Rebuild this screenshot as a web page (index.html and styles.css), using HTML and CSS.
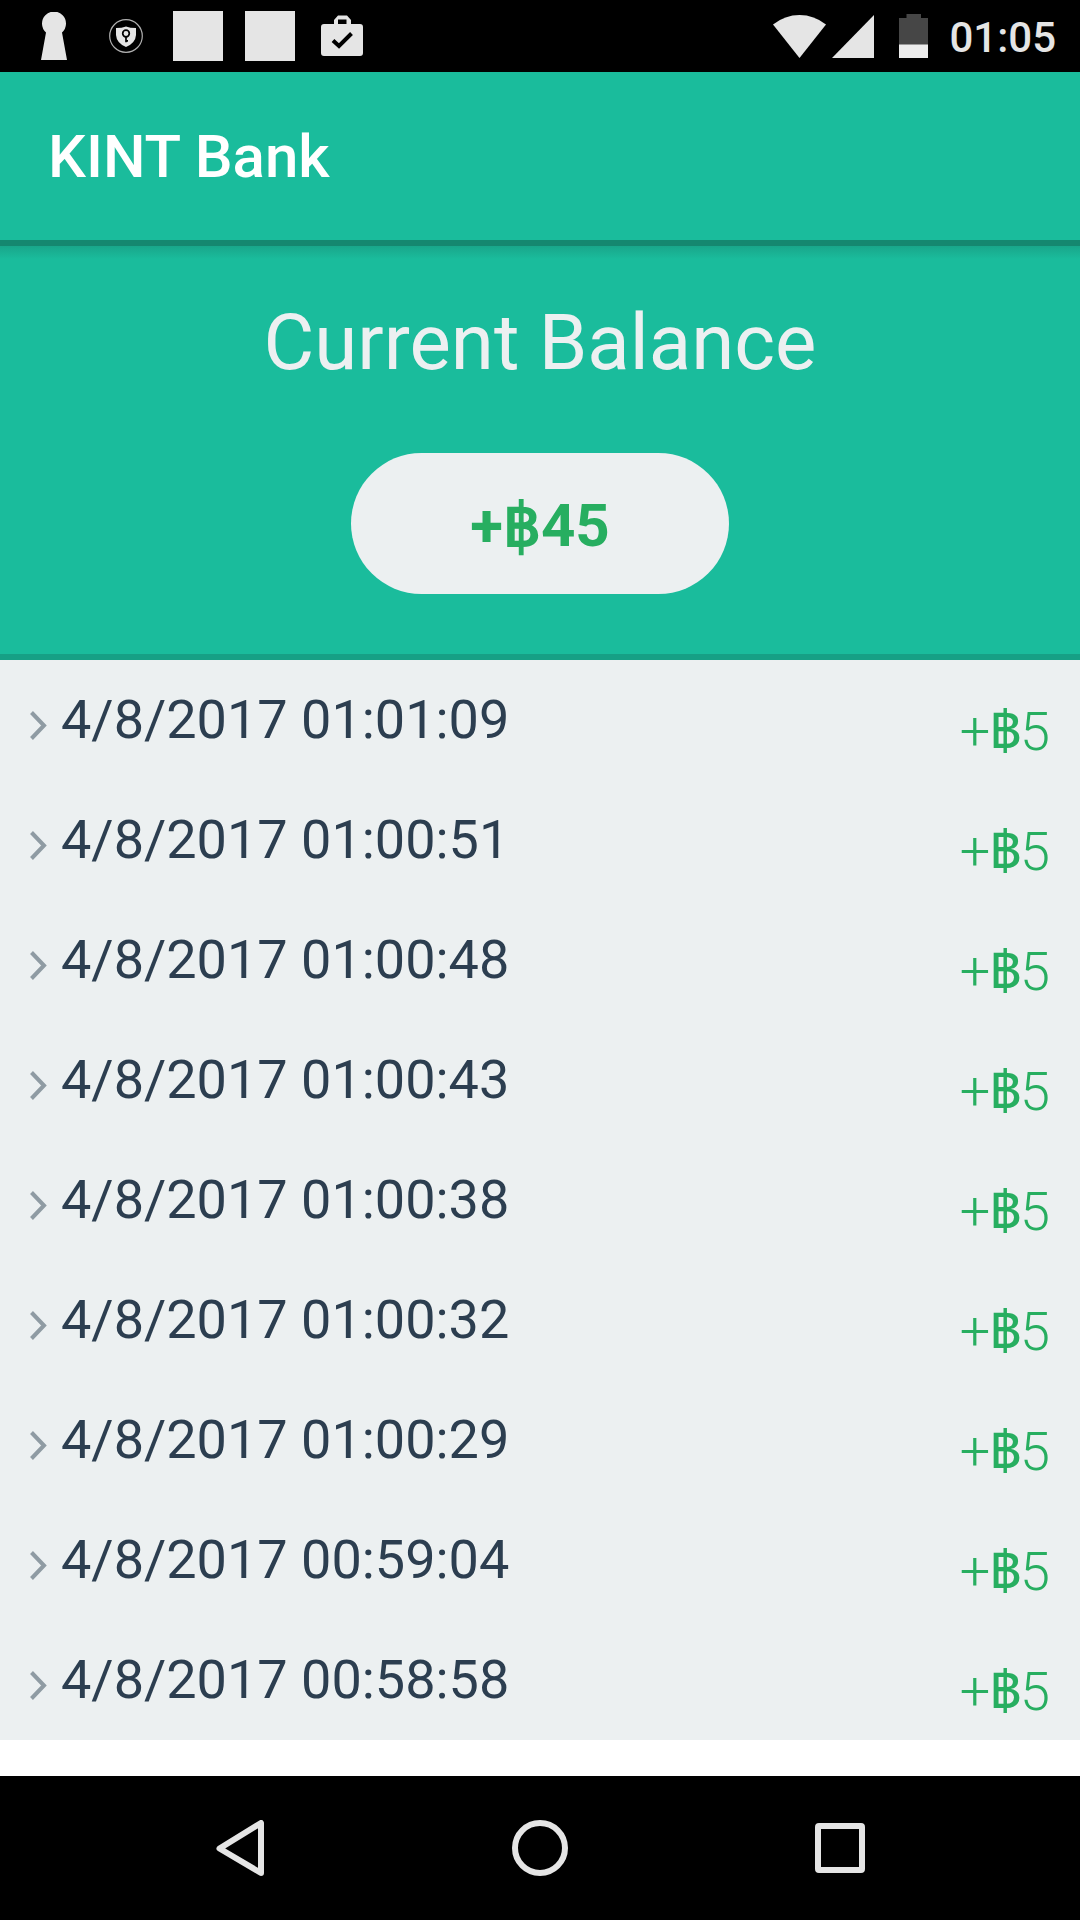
FILE: index.html
```html
<!DOCTYPE html>
<html lang="en">
  <head>
    <meta charset="utf-8" />
    <title>KINT Bank</title>
    <link rel="stylesheet" href="styles.css">
  </head>
  <body>
    <div class="status-bar">
      <div class="notifications">
        <svg class="keyhole" width="26" height="48" viewBox="0 0 26 48">
          <path d="M5 20.500A12 12 0 1 1 21 20.500L26 48H0Z" />
        </svg>
        <svg class="vpn" width="34" height="34" viewBox="0 0 34 34">
          <circle cx="17" cy="17" r="16.300" fill="none" stroke="#b0b0b0" stroke-width="1.200" />
          <path d="M7 9Q13 9 17 7.500Q21 9 27 9V16Q26.500 24 17 28Q7.500 24 7 16Z" />
          <circle cx="17" cy="14.500" r="3.300" fill="none" stroke="#000" stroke-width="1.700" />
          <path d="M17 18V23.200M17 21.800H19" fill="none" stroke="#000" stroke-width="1.700" />
        </svg>
        <span class="blank"></span>
        <span class="blank"></span>
        <svg class="bag" width="42" height="41" viewBox="0 0 42 41">
          <path fill-rule="evenodd" d="M13 9V5L17 0.500H26L30 5V9H39Q42 9 42 12V38Q42 41 39 41H3Q0 41 0 38V12Q0 9 3 9ZM17 9H25.500V4.500H17Z" />
          <path d="M12 25.500L18 31L30.500 18.500" fill="none" stroke="#000" stroke-width="4" />
        </svg>
      </div>
      <div class="system">
        <svg class="wifi" width="54" height="43" viewBox="0 0 54 43">
          <path d="M0 9.500Q12 0 26.500 0T53 9.500L26.500 43Z" />
        </svg>
        <svg class="signal" width="42" height="43" viewBox="0 0 42 43">
          <path d="M42 0V43H0Z" />
        </svg>
        <svg class="battery" width="29" height="44" viewBox="0 0 29 44">
          <path d="M7.500 0H22V4H29V31H0V4H7.500Z" fill="#464646" />
          <path d="M0 30.500H29V44H0Z" fill="#ececec" />
        </svg>
        <span class="clock">01:05</span>
      </div>
    </div>

    <header class="toolbar">
      <h1>KINT Bank</h1>
    </header>

    <section class="balance">
      <h2>Current Balance</h2>
      <div class="total">+฿45</div>
    </section>

    <ul class="transactions" id="transactions"></ul>

    <nav class="nav-bar">
      <svg width="48" height="56" viewBox="0 0 48 56">
        <path d="M45 3V53L3.500 28.500Z" />
      </svg>
      <svg width="56" height="56" viewBox="0 0 56 56">
        <circle cx="28" cy="28" r="25" />
      </svg>
      <svg width="50" height="50" viewBox="0 0 50 50">
        <rect x="3" y="3" width="44" height="44" rx="1" />
      </svg>
    </nav>

    <script>
      const transactions = [
        { date: "4/8/2017 01:01:09", amount: 5 },
        { date: "4/8/2017 01:00:51", amount: 5 },
        { date: "4/8/2017 01:00:48", amount: 5 },
        { date: "4/8/2017 01:00:43", amount: 5 },
        { date: "4/8/2017 01:00:38", amount: 5 },
        { date: "4/8/2017 01:00:32", amount: 5 },
        { date: "4/8/2017 01:00:29", amount: 5 },
        { date: "4/8/2017 00:59:04", amount: 5 },
        { date: "4/8/2017 00:58:58", amount: 5 },
      ];

      document.getElementById("transactions").innerHTML = transactions
        .map(
          (item) => `
          <li>
            <svg class="chevron" width="17" height="29" viewBox="0 0 17 29">
              <path d="M1.500 1.500L14 14.500L1.500 27.500" />
            </svg>
            <span class="date">${item.date}</span>
            <span class="amount">+<span class="baht">฿</span>${item.amount}</span>
          </li>`
        )
        .join("");
    </script>
  </body>
</html>
```
FILE: styles.css
```css
* {
  box-sizing: border-box;
}

body {
  margin: 0;
  height: 1920px;
  display: flex;
  flex-direction: column;
  background-color: #fff;
  font-family: Roboto, sans-serif;
}

h1,
h2,
ul {
  margin: 0;
  padding: 0;
}

svg {
  display: block;
  flex: none;
}

/* status bar */
.status-bar {
  height: 72px;
  padding: 0 24px 0 41px;
  display: flex;
  justify-content: space-between;
  background-color: #000;
  fill: #e5e5e5;
}

.notifications,
.system {
  display: flex;
  align-items: center;
}

.vpn {
  margin: 0 30px 0 42px;
}

.blank {
  width: 50px;
  height: 50px;
  margin-right: 22px;
  background-color: #e5e5e5;
}

.bag {
  margin: 0 0 2px 4px;
}

.signal {
  margin: 0 25px 0 5px;
}

.clock {
  margin: 0 0 -3px 21px;
  font-size: 42px;
  font-weight: 500;
  line-height: 72px;
  color: #e5e5e5;
}

/* header */
.toolbar {
  height: 174px;
  padding-left: 48px;
  background-color: #1abc9c;
  border-bottom: 6px solid #15876f;
}

.toolbar h1 {
  font-size: 60px;
  font-weight: 500;
  line-height: 170px;
  color: #fff;
}

.balance {
  height: 414px;
  padding-top: 51px;
  text-align: center;
  background: linear-gradient(#19a68a, #1abc9c 13px);
  border-bottom: 6px solid #16a085;
}

.balance h2 {
  font-size: 78px;
  font-weight: 400;
  line-height: 92px;
  color: #ecf0f1;
}

.total {
  width: 378px;
  height: 141px;
  margin: 64px auto 0;
  border-radius: 70.5px;
  font-size: 60px;
  font-weight: 700;
  line-height: 145px;
  color: #27ae60;
  background-color: #ecf0f1;
}

/* list */
.transactions {
  flex: 1;
  list-style: none;
}

.transactions li {
  height: 120px;
  padding: 0 30px;
  display: flex;
  background-color: #ecf0f1;
}

.chevron {
  margin: 51px 14px 0 0;
  fill: none;
  stroke: #8f9ba3;
  stroke-width: 4;
}

.date {
  flex: 1;
  font-size: 54px;
  line-height: 120px;
  color: #2c3e50;
}

.amount {
  font-size: 54px;
  font-weight: 300;
  line-height: 144px;
  color: #27ae60;
}

.baht {
  margin-left: -1px;
  font-family: "Noto Sans Thai", Roboto, sans-serif;
  font-size: 1.04em;
  font-weight: 400;
  letter-spacing: -2px;
  line-height: 1;
}

/* navigation */
.nav-bar {
  height: 144px;
  padding: 0 215px 0 216px;
  display: flex;
  align-items: center;
  justify-content: space-between;
  background-color: #000;
  fill: none;
  stroke: #e5e5e5;
  stroke-width: 6;
  stroke-linejoin: round;
}
```
